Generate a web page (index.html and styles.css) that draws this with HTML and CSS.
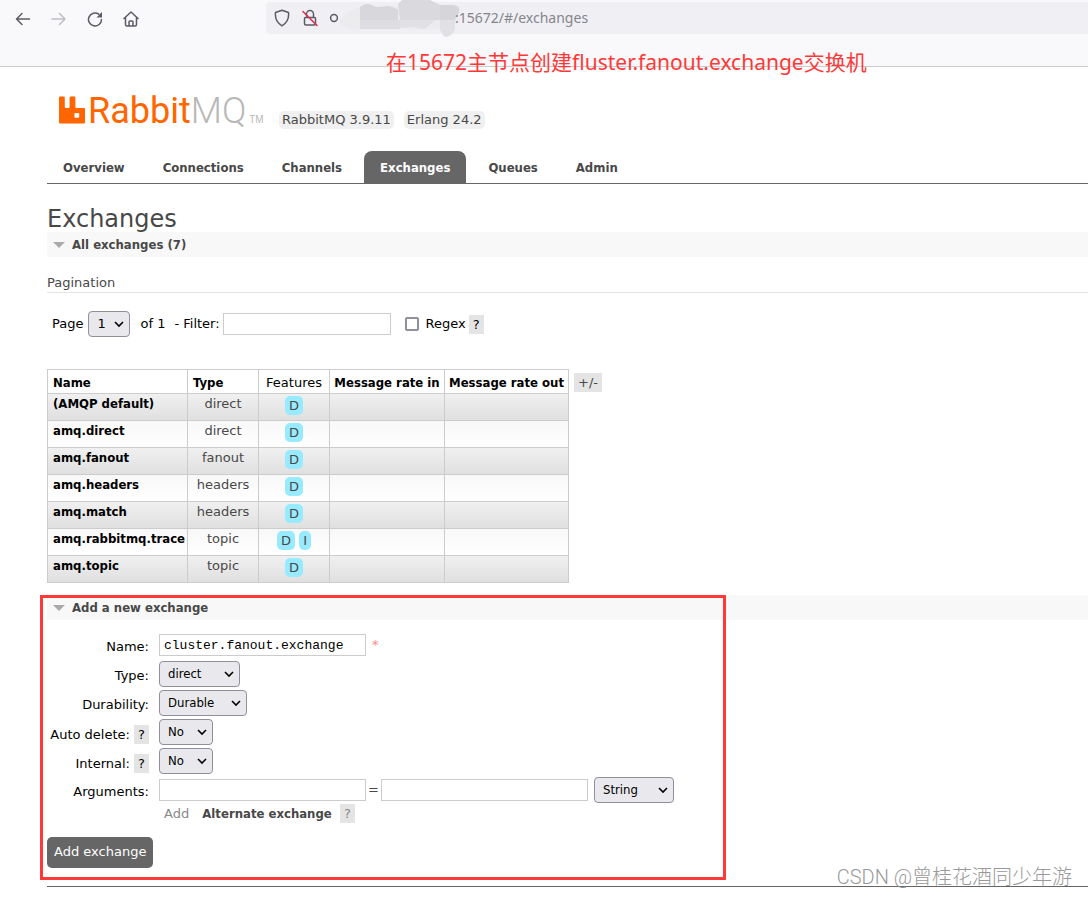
FILE: index.html
```html
<!DOCTYPE html>
<html lang="en">
<head>
<meta charset="utf-8">
<title>RabbitMQ Management</title>
<link rel="stylesheet" href="styles.css">
</head>
<body>
<header class="browser">
  <nav class="browser-nav" aria-label="Browser">
    <button class="icon-button" aria-label="Back"><svg width="16" height="16" viewBox="0 0 16 16"><path d="M14.500 8H1.500M7 2.500L1.500 8L7 13.500"/></svg></button>
    <button class="icon-button faded" aria-label="Forward"><svg width="16" height="16" viewBox="0 0 16 16"><path d="M1 8h13M8.500 2.500L14 8l-5.500 5.500"/></svg></button>
    <button class="icon-button" aria-label="Reload"><svg width="16" height="16" viewBox="0 0 16 16"><path d="M14.500 8.500A6.500 6.500 0 1 1 11.800 3.200"/><path class="solid" d="M15 1v5.500H9.500z"/></svg></button>
    <button class="icon-button" aria-label="Home"><svg width="16" height="16" viewBox="0 0 16 16"><path d="M1 7.500L8 1l7 6.500M2.500 6.500v7q0 1.500 1.500 1.500h8q1.500 0 1.500-1.500v-7M6 15v-4q0-1 1-1h2q1 0 1 1v4"/></svg></button>
  </nav>
  <div class="address">
    <svg width="16" height="18" viewBox="0 0 16 18"><path d="M8 1.200L14.500 3.500Q15.500 12.500 8 16.800Q.5 12.500 1.500 3.500z"/></svg>
    <svg width="16" height="18" viewBox="0 0 16 18"><path d="M4.500 7V5a3.500 3.500 0 0 1 7 0v3M3.500 8.500h9q1 0 1 1v5q0 1.500-1.500 1.500H4q-1.500 0-1.500-1.500v-5q0-1 1-1z"/><path class="strike" d="M1 2.500L15 16.500"/></svg>
    <svg class="dot" width="10" height="18" viewBox="0 0 10 18"><circle cx="5" cy="9" r="3.400"/></svg>
    <span class="host"><svg class="smudge" width="122" height="40" viewBox="0 0 122 40"><path fill="#ececef" d="M0 19L12 10l10-4h98v16l-24 7-16 1-20-2-40 1-8 1-12-6z"/><path fill="#d7d7dc" d="M20 7q7-6 16 0h6q8-3 16 3v10H20z"/><path fill="#d9d9de" d="M58 4l6-6h22l14 7v15H60z"/><path fill="#d5d5da" d="M100 5h14q8 2 4 9l-3 6h-15z"/><path fill="#dedee2" d="M20 20h40v9H20z"/><path fill="#e1e1e5" d="M60 20h36l-12 9-12-2-12 1zM100 20h15v9l-2 4q-8 8-11 0l-2-3z"/></svg></span>
    <span class="url">:15672/#/exchanges</span>
  </div>
  <p class="note">在15672主节点创建fluster.fanout.exchange交换机</p>
</header>

<div class="page">
  <div class="masthead">
    <a class="logo" href="#/" aria-label="RabbitMQ home"><svg class="mark" width="26" height="28" viewBox="0 0 27 28"><path fill-rule="evenodd" d="M1 0h4q1 0 1 1v10q0 1 1 1h3q1 0 1-1V1q0-1 1-1h4q1 0 1 1v10q0 1 1 1h8q1 0 1 1v14q0 1-1 1H1q-1 0-1-1V1q0-1 1-1zM17 17q-1 0-1 1v3q0 1 1 1h3q1 0 1-1v-3q0-1-1-1z"/></svg><span class="logo-text">Rabbit<span class="logo-mq">MQ</span></span><span class="tm">TM</span></a>
    <span class="version">RabbitMQ 3.9.11</span>
    <span class="version">Erlang 24.2</span>
  </div>
  <nav class="tabs" aria-label="Main">
    <a href="#/">Overview</a>
    <a href="#/connections">Connections</a>
    <a href="#/channels">Channels</a>
    <a href="#/exchanges" class="selected" aria-current="page">Exchanges</a>
    <a href="#/queues">Queues</a>
    <a href="#/users">Admin</a>
  </nav>

  <main>
    <h1>Exchanges</h1>
    <section>
      <h2 class="section-bar">All exchanges (7)</h2>
      <h3 class="subhead">Pagination</h3>
      <div class="filter">
        <label for="page">Page</label>
        <select id="page"><option>1</option></select>
        <span class="of">of 1</span>
        <label class="filter-label" for="filter">- Filter:</label>
        <input type="text" id="filter" class="filter-input">
        <input type="checkbox" id="regex">
        <label for="regex">Regex</label>
        <button class="help" aria-label="Help on regex">?</button>
      </div>
      <div class="table-row">
        <table class="list">
          <thead>
            <tr><th class="col-name">Name</th><th class="col-small">Type</th><th class="col-small plain">Features</th><th class="col-in">Message rate in</th><th class="col-out">Message rate out</th></tr>
          </thead>
          <tbody>
            <tr><td><a href="#/exchanges/default">(AMQP default)</a></td><td>direct</td><td><abbr>D</abbr></td><td></td><td></td></tr>
            <tr><td><a href="#/exchanges/amq.direct">amq.direct</a></td><td>direct</td><td><abbr>D</abbr></td><td></td><td></td></tr>
            <tr><td><a href="#/exchanges/amq.fanout">amq.fanout</a></td><td>fanout</td><td><abbr>D</abbr></td><td></td><td></td></tr>
            <tr><td><a href="#/exchanges/amq.headers">amq.headers</a></td><td>headers</td><td><abbr>D</abbr></td><td></td><td></td></tr>
            <tr><td><a href="#/exchanges/amq.match">amq.match</a></td><td>headers</td><td><abbr>D</abbr></td><td></td><td></td></tr>
            <tr><td><a href="#/exchanges/amq.rabbitmq.trace">amq.rabbitmq.trace</a></td><td>topic</td><td><abbr>D</abbr> <abbr>I</abbr></td><td></td><td></td></tr>
            <tr><td><a href="#/exchanges/amq.topic">amq.topic</a></td><td>topic</td><td><abbr>D</abbr></td><td></td><td></td></tr>
          </tbody>
        </table>
        <button class="help columns">+/-</button>
      </div>
    </section>

    <section class="add">
      <h2 class="section-bar">Add a new exchange</h2>
      <form class="form">
        <label for="name">Name:</label>
        <div class="field"><input type="text" id="name" class="wide" value="cluster.fanout.exchange"><span class="required">*</span></div>
        <label for="type">Type:</label>
        <div class="field"><select id="type" class="w-type"><option>direct</option></select></div>
        <label for="durability">Durability:</label>
        <div class="field"><select id="durability" class="w-durability"><option>Durable</option></select></div>
        <div class="label"><label for="autodelete">Auto delete:</label> <button type="button" class="help" aria-label="Help on auto delete">?</button></div>
        <div class="field"><select id="autodelete" class="w-bool"><option>No</option></select></div>
        <div class="label"><label for="internal">Internal:</label> <button type="button" class="help" aria-label="Help on internal">?</button></div>
        <div class="field"><select id="internal" class="w-bool"><option>No</option></select></div>
        <label for="argkey">Arguments:</label>
        <div>
          <div class="field">
            <input type="text" id="argkey" class="wide">
            <span class="equals">=</span>
            <input type="text" class="wide" aria-label="Argument value">
            <select class="w-string" aria-label="Argument type"><option>String</option></select>
          </div>
          <div class="shortcuts"><span>Add</span> <a href="#/exchanges">Alternate exchange</a> <button type="button" class="help muted" aria-label="Help on alternate exchange">?</button></div>
        </div>
        <button type="submit" class="submit">Add exchange</button>
      </form>
      <div class="marker"></div>
    </section>
  </main>
  <footer class="footer"></footer>
</div>
<div class="watermark">CSDN @曾桂花酒同少年游</div>
</body>
</html>
```
FILE: styles.css
```css
* { box-sizing: border-box; }

body {
  margin: 0;
  background: #fff;
  color: #484848;
  font: 13px/18px "DejaVu Sans", Verdana, sans-serif;
}

h1, h2, h3, p { margin: 0; }
a { color: inherit; text-decoration: none; }
button, input, select { font: inherit; color: #000; margin: 0; }
button { border: 0; }

/* Browser bar */
.browser {
  position: relative;
  display: flex;
  align-items: flex-start;
  height: 67px;
  padding: 2px 0 0 15px;
  background: #f9f9fb;
  border-bottom: 1px solid #ccc;
}
.browser-nav { display: flex; gap: 20px; width: 251px; height: 33px; align-items: center; }
.icon-button { display: flex; padding: 0; background: none; }
.browser svg { display: block; fill: none; stroke: #5b5b66; stroke-width: 1.500; stroke-linecap: round; stroke-linejoin: round; }
.browser .solid { fill: #5b5b66; stroke: none; }
.browser .strike { stroke: #e22850; }
.browser .faded svg { stroke: #bfbfc5; }
.address {
  flex: 1;
  display: flex;
  align-items: center;
  height: 32px;
  padding-left: 8px;
  gap: 12px;
  background: #f0f0f4;
  border-radius: 4px 0 0 4px;
}
.address .dot { margin-left: -1px; }
.host { position: relative; width: 92px; height: 32px; }
.browser .smudge { position: absolute; left: -11px; top: -2px; stroke: none; }
.smudge path { stroke: none; }
.url { position: relative; color: #85858c; font: 14px/20px "Noto Sans", sans-serif; }
.note {
  position: absolute;
  left: 386px;
  top: 47px;
  white-space: nowrap;
  color: #ff3838;
  font: 21px/30px "Noto Sans", "Noto Sans CJK SC", sans-serif;
}

/* Masthead */
.page { padding: 27px 0 0 47px; }
.masthead { display: flex; align-items: flex-end; height: 35px; padding-left: 12px; }
.logo { display: flex; align-items: flex-end; height: 35px; width: 208px; margin-right: 12px; color: #f60; }
.mark { fill: #f60; margin: 0 3px 5px 0; }
.logo-text { font: 36px/36px Roboto, sans-serif; }
.logo-mq { color: #b8b8b8; font-weight: 300; }
.tm { color: #b8b8b8; font: 10px/18px "Liberation Sans", sans-serif; margin-left: 3px; }
.version { margin-right: 10px; padding: 0 3px; border-radius: 5px; background: #f0f0f0; }

.tabs { display: flex; gap: 6px; margin-top: 22px; border-bottom: 1px solid #666; }
.tabs a { padding: 8px 16px 6px; border-radius: 8px 8px 0 0; font-weight: bold; }
.tabs .selected { background: #666; color: #fff; }

.tabs a, .section-bar, th, td:first-child, .shortcuts a { font-family: "DejaVu Sans Condensed", "DejaVu Sans", sans-serif; }

h1 { margin-top: 22px; font-size: 24px; line-height: 26px; font-weight: normal; }
.section-bar {
  display: flex;
  align-items: center;
  gap: 7px;
  height: 25px;
  padding-left: 6px;
  background: #f8f8f8;
  font-size: 13px;
}
.section-bar::before {
  content: "";
  border: 6px solid transparent;
  border-top-color: #aaa;
  border-bottom: 0;
}
.subhead { margin-top: 17px; border-bottom: 1px solid #e4e4e4; font-weight: normal; font-size: 13px; }

input[type="text"] { height: 22px; border: 1px solid #ccc; padding: 0 4px; background: #fff; font: 13px/18px "Liberation Mono", monospace; }
input[type="checkbox"] {
  appearance: none;
  width: 14px;
  height: 14px;
  border: 2px solid #8f8f9d;
  border-radius: 2px;
  background: #fff;
}
select {
  appearance: none;
  height: 26px;
  border: 1px solid #8f8f9d;
  border-radius: 4px;
  padding: 0 8px;
  background: #e9e9ed url("data:image/svg+xml,%3Csvg xmlns='http://www.w3.org/2000/svg' width='10' height='8'%3E%3Cpath d='M1 2l4 4 4-4' fill='none' stroke='%23000' stroke-width='1.600'/%3E%3C/svg%3E") no-repeat right 5px center;
  font: 13px/18px "DejaVu Sans Condensed", "DejaVu Sans", sans-serif;
}
.help { padding: 0 4px; background: #e4e4e4; line-height: 19px; }

.filter { display: flex; align-items: center; margin-top: 18px; padding-left: 5px; color: #000; }
.filter select { width: 42px; margin-left: 5px; font-family: "DejaVu Sans", sans-serif; }
.of { margin: 0 9px 0 10px; }
.filter-input { width: 168px; margin: 0 14px 0 3px; }
.filter [for="regex"] { margin: 0 3px 0 7px; }

/* Exchange table */
.table-row { display: flex; align-items: flex-start; gap: 5px; margin-top: 32px; }
.list { border-collapse: collapse; }
.list th, .list td { border: 1px solid #ccc; padding: 4px 4px 1px; text-align: center; color: #000; white-space: nowrap; }
.list th:first-child, .list th:nth-child(2), .list td:first-child { text-align: left; padding-left: 5px; padding-right: 2px; }
.list .col-name { width: 140px; }
.list .col-small { width: 71px; }
.list .col-in { width: 115px; }
.list .col-out { width: 124px; }
.list .plain { font-family: "DejaVu Sans", sans-serif; font-weight: normal; }
.list td { height: 27px; padding: 1px 4px; vertical-align: top; color: #484848; }
.list td:first-child { color: #000; font-weight: bold; }
.list td:nth-child(3) { padding-top: 2px; }
.list tbody tr { background: linear-gradient(#f8f8f8, #fff); }
.list tbody tr:nth-child(odd) { background: linear-gradient(#f0f0f0, #dfdfdf); }
abbr { display: inline-block; padding: 0 4px; border-radius: 5px; background: #98ebff; line-height: 19px; }
.columns { margin-top: 4px; color: #484848; }

/* New exchange */
.add { position: relative; margin-top: 12px; }
.form {
  display: grid;
  grid-template-columns: 102px 1fr;
  gap: 3px 10px;
  padding-top: 12px;
}
.form > label, .label { padding-top: 6px; text-align: right; color: #000; white-space: nowrap; }
.field { display: flex; align-items: center; height: 26px; }
.wide { width: 207px; }
.required { margin-left: 6px; color: #f88; }
.w-type { width: 81px; }
.w-durability { width: 88px; }
.w-bool { width: 54px; }
.w-string { width: 80px; margin-left: 6px; }
.equals { width: 15px; text-align: center; }
.shortcuts { padding: 1px 0 0 5px; color: #888; }
.shortcuts a { margin: 0 4px 0 9px; color: #484848; font-weight: bold; }
.muted { color: #888; }
.submit {
  grid-column: 1 / -1;
  justify-self: start;
  margin-top: 11px;
  padding: 6px 7px 7px;
  border-radius: 5px;
  background: #666;
  color: #fff;
}
.marker { position: absolute; left: -7px; top: 0; bottom: -12px; width: 686px; border: 3px solid #ff3838; }
.footer { margin-top: 18px; border-top: 1px solid #666; }
.watermark {
  position: absolute;
  right: 16px;
  top: 862px;
  color: #999;
  font: 20px/30px Roboto, "Noto Sans CJK SC", sans-serif;
  font-weight: 300;
}
```
